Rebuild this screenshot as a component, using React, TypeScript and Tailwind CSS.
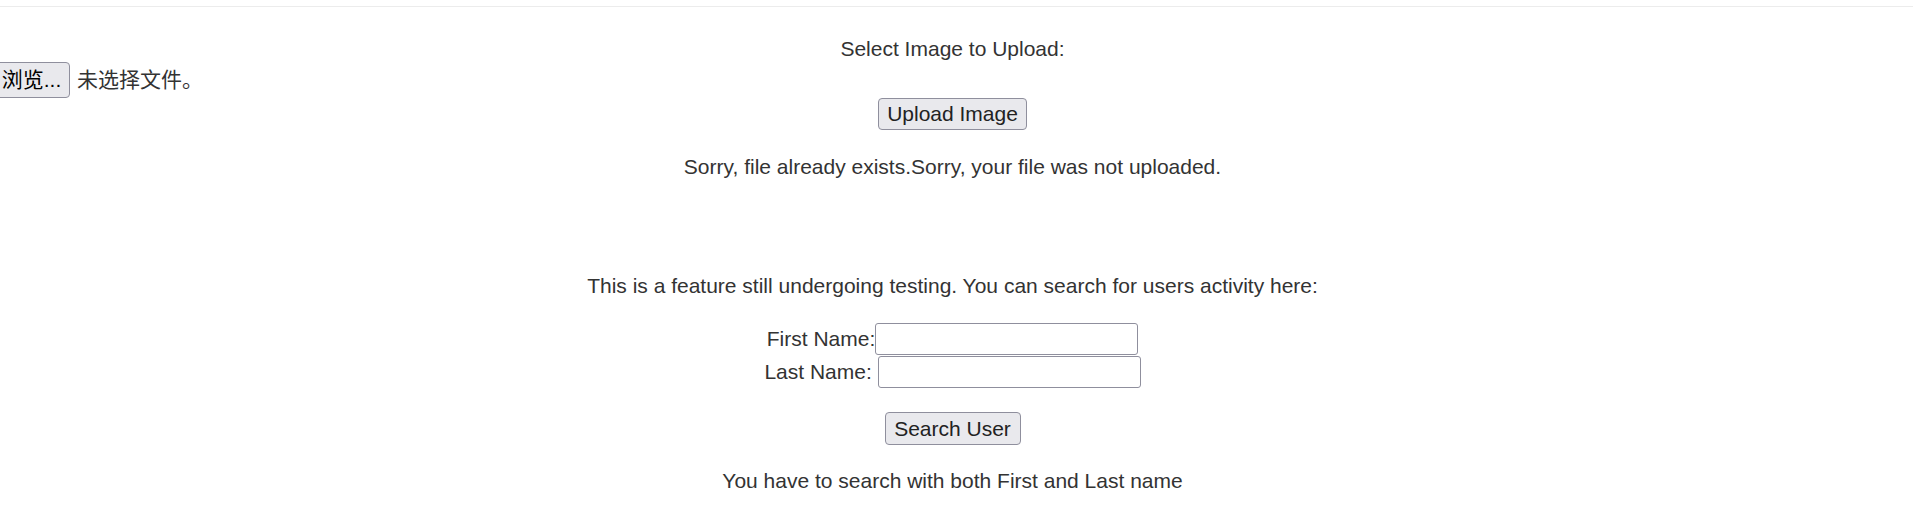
export default function App() {
  const btn =
    "flex items-center justify-center rounded-[4px] border border-[#8f8f9d] bg-[#e9e9ed] text-[#222]";
  const input = "h-[32px] w-[263px] rounded-[3px] border border-[#8f8f9d] bg-white";

  return (
    <div className="min-h-screen bg-white font-['Liberation_Sans','Noto_Sans_CJK_SC',Arial,sans-serif] text-[21px] leading-[24px] text-[#333]">
      {/* divider left over from the header */}
      <div className="pt-[6px]">
        <div className="h-px bg-[#ececec]" />
      </div>

      <div className="flex w-[1905px] flex-col items-center">
        {/* upload form */}
        <p className="mt-[30px]">Select Image to Upload:</p>
        <div className="flex h-[37px] w-full items-center self-start">
          <button className={`${btn} -ml-[7px] h-[36px] w-[77px] text-[21px] text-black`}>
            浏览...
          </button>
          <span className="ml-[7px] text-[21px]">未选择文件。</span>
        </div>
        <button className={`${btn} h-[32px] w-[149px]`}>Upload Image</button>
        <p className="mt-[25px]">
          Sorry, file already exists.Sorry, your file was not uploaded.
        </p>

        {/* user search */}
        <p className="mt-[95px]">
          This is a feature still undergoing testing. You can search for users activity here:
        </p>
        <div className="mt-[25px] flex items-center">
          <span>First Name:</span>
          <input className={input} />
        </div>
        <div className="mt-[1px] flex items-center">
          <span>Last Name:&nbsp;</span>
          <input className={input} />
        </div>
        <button className={`${btn} mt-[24px] h-[33px] w-[136px]`}>Search User</button>
        <p className="mt-[24px]">You have to search with both First and Last name</p>
      </div>
    </div>
  );
}
